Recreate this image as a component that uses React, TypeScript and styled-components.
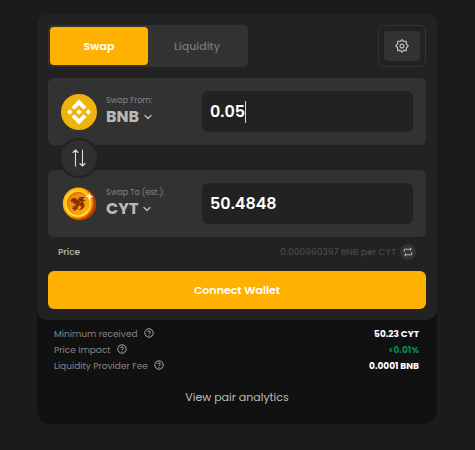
import React, { useState } from "react";
import styled, { createGlobalStyle, css } from "styled-components";

const GlobalStyle = createGlobalStyle`
  * { box-sizing: border-box; }
  body {
    margin: 0;
    background: #1b1b1b;
    color: #fff;
    font-family: Poppins, Inter, "Open Sans", sans-serif;
  }
  button, input { font: inherit; color: inherit; border: 0; margin: 0; padding: 0; }
  button { cursor: pointer; }
`;

const Page = styled.main`
  padding: 14px 38px 26px 37px;
`;

const Card = styled.section`
  background: #111;
  border-radius: 14px;
`;

const Panel = styled.form`
  padding: 11px;
  background: #222;
  border-radius: 10px;
`;

const Toolbar = styled.header`
  display: flex;
  justify-content: space-between;
  margin-bottom: 11px;
`;

const Tabs = styled.div`
  display: flex;
  width: 200px;
  height: 42px;
  padding: 2px;
  background: #323232;
  border-radius: 5px;
`;

const Tab = styled.button<{ $active?: boolean }>`
  flex: 1;
  border-radius: 4px;
  font-size: 11px;
  font-weight: 500;
  color: #777;
  background: transparent;
  ${(p) =>
    p.$active &&
    css`
      background: #ffb101;
      color: #fff;
      font-weight: 600;
    `}
`;

const SettingsFrame = styled.div`
  display: flex;
  width: 48px;
  height: 42px;
  padding: 5px;
  border: 1px solid #343434;
  border-radius: 6px;
`;

const SettingsButton = styled.button`
  display: grid;
  place-items: center;
  flex: 1;
  background: #323232;
  border-radius: 4px;
  color: #b5b5ba;
`;

const TokenRow = styled.div`
  display: flex;
  align-items: center;
  height: 67px;
  padding: 0 13px;
  background: #323232;
  border-radius: 6px;
`;

const TokenInfo = styled.div`
  flex: 1;
  margin-left: 9px;
  padding-bottom: 2px;
`;

const TokenLabel = styled.label`
  display: block;
  font-size: 8px;
  line-height: 12px;
  color: #858585;
`;

const TokenSelect = styled.button`
  display: flex;
  align-items: center;
  gap: 5px;
  background: none;
  font-size: 16px;
  line-height: 20px;
  font-weight: 700;
  color: #b9b9b9;
`;

const Field = styled.div`
  display: flex;
  align-items: center;
  width: 211px;
  height: 41px;
  padding: 0 8px;
  background: #222;
  border-radius: 6px;
`;

const Amount = styled.input`
  field-sizing: content;
  max-width: 100%;
  background: none;
  outline: none;
  font-size: 16px;
  line-height: 24px;
  font-weight: 600;
  color: #fff;
`;

const Caret = styled.span`
  width: 1px;
  height: 22px;
  background: #ddd;
`;

const Between = styled.div`
  display: flex;
  align-items: center;
  height: 25px;
  padding-left: 11px;
`;

const FlipButton = styled.button`
  display: grid;
  place-items: center;
  flex: none;
  width: 40px;
  height: 40px;
  border: 2px solid #222;
  border-radius: 50%;
  background: #2f2f2f;
  color: #ddd;
  z-index: 1;
`;

const PriceRow = styled.div`
  display: flex;
  align-items: center;
  height: 30px;
  margin-bottom: 4px;
  padding: 0 10px;
  font-size: 9px;
  font-weight: 500;
  color: #494949;
`;

const PriceLabel = styled.span`
  flex: 1;
  color: #b9b9bd;
`;

const InvertButton = styled.button`
  display: grid;
  place-items: center;
  width: 16px;
  height: 16px;
  margin-left: 4px;
  border-radius: 50%;
  background: #333;
  color: #c4c4c4;
`;

const ConnectButton = styled.button`
  display: block;
  width: 100%;
  height: 38px;
  border-radius: 6px;
  background: #ffb101;
  color: #fff;
  font-size: 11px;
  font-weight: 600;
`;

const Details = styled.dl`
  margin: 0;
  padding: 6px 18px 0 17px;
`;

const Detail = styled.div`
  display: flex;
  justify-content: space-between;
  height: 16px;
  font-size: 9px;
  line-height: 16px;
`;

const DetailName = styled.dt`
  display: flex;
  gap: 6px;
  font-weight: 400;
  color: #858585;
`;

const HelpButton = styled.button`
  display: flex;
  height: 13px;
  align-items: center;
  background: none;
  color: #a9a9ad;
`;

const DetailValue = styled.dd<{ $good?: boolean }>`
  margin: 0;
  font-weight: 700;
  color: ${(p) => (p.$good ? "#078a50" : "#fff")};
`;

const Footer = styled.footer`
  display: flex;
  justify-content: center;
  padding: 13px 0 17px;
`;

const AnalyticsLink = styled.a`
  font-size: 11px;
  line-height: 20px;
  color: #bdbdbd;
  text-decoration: none;
`;

const BnbIcon = () => (
  <svg width="36" height="36" viewBox="0 0 36 36" aria-hidden="true">
    <circle cx="18" cy="18" r="18" fill="#efb40c" />
    <g fill="#fff">
      <path d="M18 5.5l7.5 7.5-2.8 2.8-4.7-4.7-4.7 4.7-2.8-2.8z" />
      <path d="M18 30.5l7.5-7.5-2.8-2.8-4.7 4.7-4.7-4.7-2.8 2.8z" />
      <path d="M8.7 15.3l2.7 2.7-2.7 2.7L6 18zM27.3 15.3L30 18l-2.7 2.7-2.7-2.7zM18 15.2l2.8 2.8-2.8 2.8-2.8-2.8z" />
    </g>
  </svg>
);

const CytIcon = () => (
  <svg width="36" height="36" viewBox="0 0 36 36" aria-hidden="true">
    <defs>
      <linearGradient id="rim" x1="0" y1="0" x2="1" y2="1">
        <stop offset="0" stopColor="#ffc61c" />
        <stop offset=".5" stopColor="#f99a0a" />
        <stop offset="1" stopColor="#d9520a" />
      </linearGradient>
      <linearGradient id="face" x1="0" y1="0" x2=".8" y2="1">
        <stop offset="0" stopColor="#e87c08" />
        <stop offset="1" stopColor="#ffae12" />
      </linearGradient>
    </defs>
    <circle cx="18.8" cy="18.2" r="16.4" fill="#b5380a" />
    <ellipse cx="17.2" cy="17.4" rx="15.4" ry="15.8" fill="url(#rim)" />
    <ellipse cx="17" cy="17.4" rx="13.6" ry="14" fill="#ffd01c" />
    <ellipse cx="17" cy="17.6" rx="11" ry="11.6" fill="#d9650a" />
    <ellipse cx="17.4" cy="18" rx="10.6" ry="11" fill="url(#face)" />
    <path d="M5 21.5a12.5 12.5 0 0 0 22 3" fill="none" stroke="#ffe32e" strokeWidth="1.8" />
    <path
      d="M9.5 14.5c1.5-2 3-2.7 5-2.3l2 1.8 2-2.8 5.5-.4-2.4 2.1 3.2 1.6-3.4 1.2c2.6 2.2 2.9 4.3 1 6.3-1.4 1.8-3.3 2.2-5 1.5 2.2-.5 3.2-1.7 2.6-3-1-1.7-2.6-1-3.1.8-.6 2.2-2.2 3.6-5 3.6l1.3-1.9-2.3.1 1.6-2-2-.3c2.8-.7 4.2-1.9 4.3-3.3l-2.7.3.4-1.9-1.6.6z"
      fill="#8b3006"
    />
    <path d="M18 14.5l2 1.5-1.5 1.5M13 21l2-1.5" fill="none" stroke="#d97109" strokeWidth=".8" />
    <path d="M28.5 6.5l1 3 3 1-3 1-1 3-1-3-3-1 3-1z" fill="#fff4cf" />
    <circle cx="28.5" cy="10.5" r="1.6" fill="#fff" />
  </svg>
);

const GearIcon = () => (
  <svg width="14" height="14" viewBox="0 0 14 14" fill="none" stroke="currentColor" strokeWidth="1.3" strokeLinejoin="round" aria-hidden="true">
    <path d="M7 .8l1.5 1.6 2.8-.1.1 2.6L13.2 7l-1.8 1.8-.1 2.7-2.8-.1L7 13.2l-1.5-1.8-2.8.1-.1-2.7L.8 7l1.8-2.1.1-2.6 2.8.1z" />
    <circle cx="7" cy="7" r="1.9" />
  </svg>
);

const ChevronIcon = () => (
  <svg width="8" height="6" viewBox="0 0 8 6" fill="none" stroke="currentColor" strokeWidth="1.4" strokeLinecap="round" strokeLinejoin="round" aria-hidden="true">
    <path d="M1 1.5l3 3 3-3" />
  </svg>
);

const FlipIcon = () => (
  <svg width="14" height="18" viewBox="0 0 14 18" fill="none" stroke="currentColor" strokeWidth="1.1" strokeLinecap="round" strokeLinejoin="round" aria-hidden="true">
    <path d="M3.5 17V1M1 3.5L3.5 1 6 3.5M10.5 1v16M8 14.5l2.5 2.5 2.5-2.5" />
  </svg>
);

const InvertIcon = () => (
  <svg width="10" height="10" viewBox="0 0 11 11" fill="none" stroke="currentColor" strokeWidth="1" strokeLinejoin="round" aria-hidden="true">
    <path d="M1.5 5.5v-3H9M7.5.8L9.3 2.5 7.5 4.2M9.5 5.5v3H2M3.5 6.8L1.7 8.5l1.8 1.7" />
  </svg>
);

const HelpIcon = () => (
  <svg width="10" height="10" viewBox="0 0 10 10" fill="none" stroke="currentColor" strokeWidth="1" aria-hidden="true">
    <circle cx="5" cy="5" r="4.2" />
    <path d="M3.7 4.1c0-1.7 2.7-1.6 2.7 0C6.4 5 5 5 5 6M5 6.8v.9" />
  </svg>
);

type TokenProps = {
  id: string;
  label: string;
  symbol: string;
  icon: React.ReactNode;
  initial: string;
  active?: boolean;
};

function Token({ id, label, symbol, icon, initial, active }: TokenProps) {
  const [amount, setAmount] = useState(initial);
  return (
    <TokenRow>
      {icon}
      <TokenInfo>
        <TokenLabel htmlFor={id}>{label}</TokenLabel>
        <TokenSelect type="button">
          {symbol}
          <ChevronIcon />
        </TokenSelect>
      </TokenInfo>
      <Field>
        <Amount id={id} inputMode="decimal" value={amount} onChange={(e) => setAmount(e.target.value)} />
        {active && <Caret />}
      </Field>
    </TokenRow>
  );
}

const details = [
  { name: "Minimum received", value: "50.23 CYT" },
  { name: "Price Impact", value: "<0.01%", good: true },
  { name: "Liquidity Provider Fee", value: "0.0001 BNB" },
];

export default function App() {
  return (
    <Page>
      <GlobalStyle />
      <Card>
        <Panel onSubmit={(e) => e.preventDefault()}>
          <Toolbar>
            <Tabs>
              <Tab type="button" $active>Swap</Tab>
              <Tab type="button">Liquidity</Tab>
            </Tabs>
            <SettingsFrame>
              <SettingsButton type="button" aria-label="Settings"><GearIcon /></SettingsButton>
            </SettingsFrame>
          </Toolbar>
          <Token id="from" label="Swap From:" symbol="BNB" icon={<BnbIcon />} initial="0.05" active />
          <Between>
            <FlipButton type="button" aria-label="Switch tokens"><FlipIcon /></FlipButton>
          </Between>
          <Token id="to" label="Swap To (est.):" symbol="CYT" icon={<CytIcon />} initial="50.4848" />
          <PriceRow>
            <PriceLabel>Price</PriceLabel>
            <span>0.000990397 BNB per CYT</span>
            <InvertButton type="button" aria-label="Invert price"><InvertIcon /></InvertButton>
          </PriceRow>
          <ConnectButton type="submit">Connect Wallet</ConnectButton>
        </Panel>
        <Details>
          {details.map((d) => (
            <Detail key={d.name}>
              <DetailName>
                {d.name}
                <HelpButton type="button" aria-label={`About ${d.name}`}><HelpIcon /></HelpButton>
              </DetailName>
              <DetailValue $good={d.good}>{d.value}</DetailValue>
            </Detail>
          ))}
        </Details>
        <Footer>
          <AnalyticsLink href="#analytics">View pair analytics</AnalyticsLink>
        </Footer>
      </Card>
    </Page>
  );
}
